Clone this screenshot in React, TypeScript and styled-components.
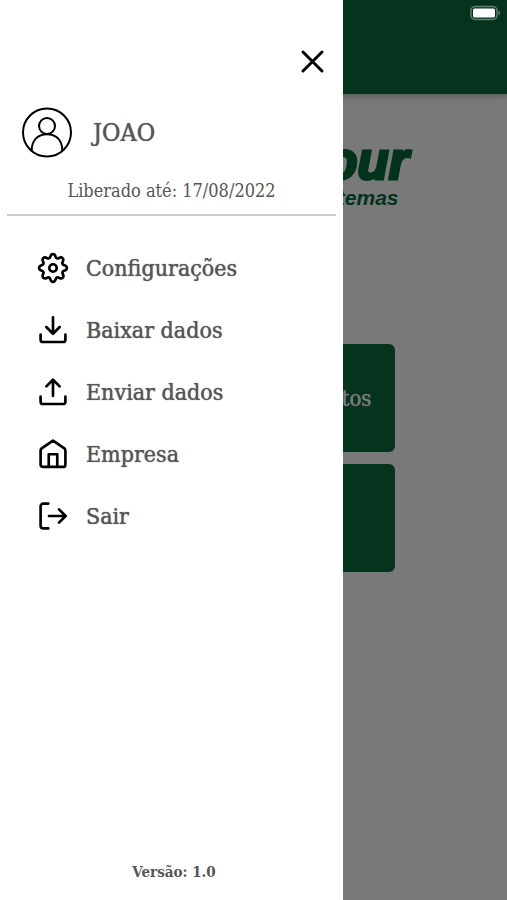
import React from "react";
import styled, { createGlobalStyle } from "styled-components";

const slab = '"Roboto Slab", "DejaVu Serif Condensed", "DejaVu Serif", serif';

const GlobalStyle = createGlobalStyle`
  *, *::before, *::after { box-sizing: border-box; }
  body { margin: 0; background: #f3f3f3; }
  button { font: inherit; color: inherit; background: none; border: 0; padding: 0; cursor: pointer; }
`;

const Screen = styled.div`
  position: relative;
  min-height: 100vh;
  overflow: hidden;
  background: #f3f3f3;
  font-family: ${slab};
`;

const TopBar = styled.header`
  height: 94px;
  background: #0c663c;
  box-shadow: 0 2px 6px rgba(0, 0, 0, 0.3);
`;

const StatusBar = styled.div`
  position: absolute;
  top: 5px;
  right: 5px;
  svg { display: block; }
`;

const Home = styled.main`
  display: flex;
  flex-direction: column;
  align-items: center;
  padding-top: 42px;
`;

const Brand = styled.div`
  width: 310px;
  display: flex;
  flex-direction: column;
  align-items: flex-end;
  color: #006636;
  font-family: "Liberation Sans", Arial, sans-serif;
  font-style: italic;
  font-weight: 700;
`;

const BrandName = styled.span`
  font-size: 51px;
  line-height: 52px;
  -webkit-text-stroke: 3px #006636;
`;

const BrandTag = styled.span`
  padding-right: 10px;
  font-size: 21px;
  line-height: 20px;
`;

const Cards = styled.div`
  width: 56%;
  margin-top: 136px;
  display: flex;
  flex-direction: column;
  gap: 12px;
`;

const Card = styled.button`
  && {
    height: 108px;
    padding: 0 24px;
    border-radius: 6px;
    background: #0c663c;
    color: #f3f3f3;
    font-size: 22px;
    text-align: right;
    text-shadow: 0 0 1px #f3f3f3;
  }
`;

const Backdrop = styled.div`
  position: absolute;
  inset: 0;
  background: rgba(0, 0, 0, 0.5);
`;

const Drawer = styled.aside`
  position: absolute;
  top: 0;
  bottom: 0;
  left: 0;
  width: 343px;
  max-width: 85%;
  padding: 46px 7px 18px;
  display: flex;
  flex-direction: column;
  background: #fff;
  color: #565656;
`;

const CloseButton = styled.button`
  align-self: flex-end;
  width: 30px;
  height: 30px;
  margin-right: 9px;
`;

const Profile = styled.div`
  display: flex;
  align-items: center;
  gap: 20px;
  margin-top: 31px;
  padding-left: 14px;
`;

const UserName = styled.span`
  font-size: 25px;
  line-height: 32px;
  text-shadow: 0 0 1px #565656;
`;

const License = styled.p`
  margin: 0;
  padding: 20px 0 11px;
  border-bottom: 2px solid #cbcbcb;
  font-size: 18px;
  line-height: 24px;
  text-align: center;
`;

const Menu = styled.nav`
  display: flex;
  flex-direction: column;
  gap: 30px;
  padding: 36px 0 0 30px;
`;

const MenuItem = styled.button`
  && {
    display: flex;
    align-items: center;
    gap: 17px;
    font-size: 23px;
    line-height: 32px;
    text-shadow: 0 0 1px #565656;
  }
`;

const Version = styled.footer`
  margin-top: auto;
  padding-left: 5px;
  font-size: 15px;
  line-height: 20px;
  font-weight: 700;
  text-align: center;
`;

const Icon = styled.svg<{ $weight?: number }>`
  display: block;
  flex: none;
  fill: none;
  stroke: #000;
  stroke-width: ${({ $weight = 2 }) => $weight};
  stroke-linecap: round;
  stroke-linejoin: round;
`;

const items = [
  {
    label: "Configurações",
    icon: (
      <>
        <circle cx="12" cy="12" r="2.8" />
        <path d="M12 1.600c1.700 0 1.600 1.200 2 2.200.4 1 1.300 1.300 2.200.9 1-.5 1.900-1.200 3-.1s.4 2 0 3c-.5.9-.1 1.800.9 2.200s2.300.4 2.300 2.200-1.200 1.700-2.200 2.100-1.400 1.300-.9 2.200c.4 1 1.100 1.900 0 3s-2 .4-3 0c-.9-.5-1.800-.1-2.200.9s-.4 2.200-2.100 2.200-1.700-1.200-2.100-2.200-1.300-1.400-2.200-.9c-1 .4-1.900 1.100-3 0s-.4-2 0-3c.5-.9.1-1.800-.9-2.200s-2.200-.4-2.200-2.100 1.200-1.800 2.200-2.200 1.400-1.300.9-2.200c-.4-1-1.100-1.900 0-3s2-.4 3 .1c.9.4 1.800.1 2.200-.9s.4-2.200 2.100-2.200z" />
      </>
    ),
  },
  { label: "Baixar dados", icon: <path d="M12 2.500v12M7 9.800l5 5 5-5M2.700 15.500v3.800a1.700 1.700 0 0 0 1.700 1.700h15.200a1.700 1.700 0 0 0 1.700-1.700v-3.800" /> },
  { label: "Enviar dados", icon: <path d="M12 15V3M7 7.800l5-5 5 5M2.700 15.500v3.800a1.700 1.700 0 0 0 1.700 1.700h15.200a1.700 1.700 0 0 0 1.700-1.700v-3.800" /> },
  { label: "Empresa", icon: <path d="M2.700 9.400c0-.6.3-1.200.8-1.600L12 1.900l8.500 5.900c.5.4.8 1 .8 1.600V20a1.700 1.700 0 0 1-1.700 1.700H4.400A1.700 1.700 0 0 1 2.700 20zM8.800 21.500v-9.300h6.400v9.300" /> },
  { label: "Sair", icon: <path d="M8.500 2.700H4.700a2 2 0 0 0-2 2v14.600a2 2 0 0 0 2 2h3.800M9 12h12.300M16.500 7l5 5-5 5" /> },
];

const BatteryIcon = () => (
  <svg width="32" height="16" viewBox="0 0 32 16" role="img" aria-label="Bateria">
    <rect x="1" y="1.500" width="26" height="13" rx="4" fill="none" stroke="#5c8370" strokeWidth="1.500" />
    <rect x="3" y="3.500" width="22" height="9" rx="1.500" fill="#fff" />
    <path d="M28.500 5.500c2 .8 2 4.200 0 5z" fill="#5c8370" />
  </svg>
);

export default function App() {
  return (
    <>
      <GlobalStyle />
      <Screen>
        <TopBar />
        <Home>
          <Brand>
            <BrandName>our</BrandName>
            <BrandTag>temas</BrandTag>
          </Brand>
          <Cards>
            <Card type="button">tos</Card>
            <Card type="button" aria-label="Atalho" />
          </Cards>
        </Home>
        <Backdrop />
        <StatusBar>
          <BatteryIcon />
        </StatusBar>
        <Drawer>
          <CloseButton type="button" aria-label="Fechar">
            <Icon width="30" height="30" viewBox="0 0 30 30" $weight={3}>
              <path d="M6 6l19 19M25 6L6 25" />
            </Icon>
          </CloseButton>
          <Profile>
            <Icon width="52" height="52" viewBox="0 0 52 52">
              <circle cx="26" cy="25.500" r="24" />
              <circle cx="26" cy="19" r="8" />
              <path d="M10.700 43.500C10.700 33 17 27.200 26 27.200S41.300 33 41.300 43.500" />
            </Icon>
            <UserName>JOAO</UserName>
          </Profile>
          <License>Liberado até: 17/08/2022</License>
          <Menu>
            {items.map(({ label, icon }) => (
              <MenuItem type="button" key={label}>
                <Icon width="32" height="32" viewBox="0 0 24 24">{icon}</Icon>
                {label}
              </MenuItem>
            ))}
          </Menu>
          <Version>Versão: 1.0</Version>
        </Drawer>
      </Screen>
    </>
  );
}
